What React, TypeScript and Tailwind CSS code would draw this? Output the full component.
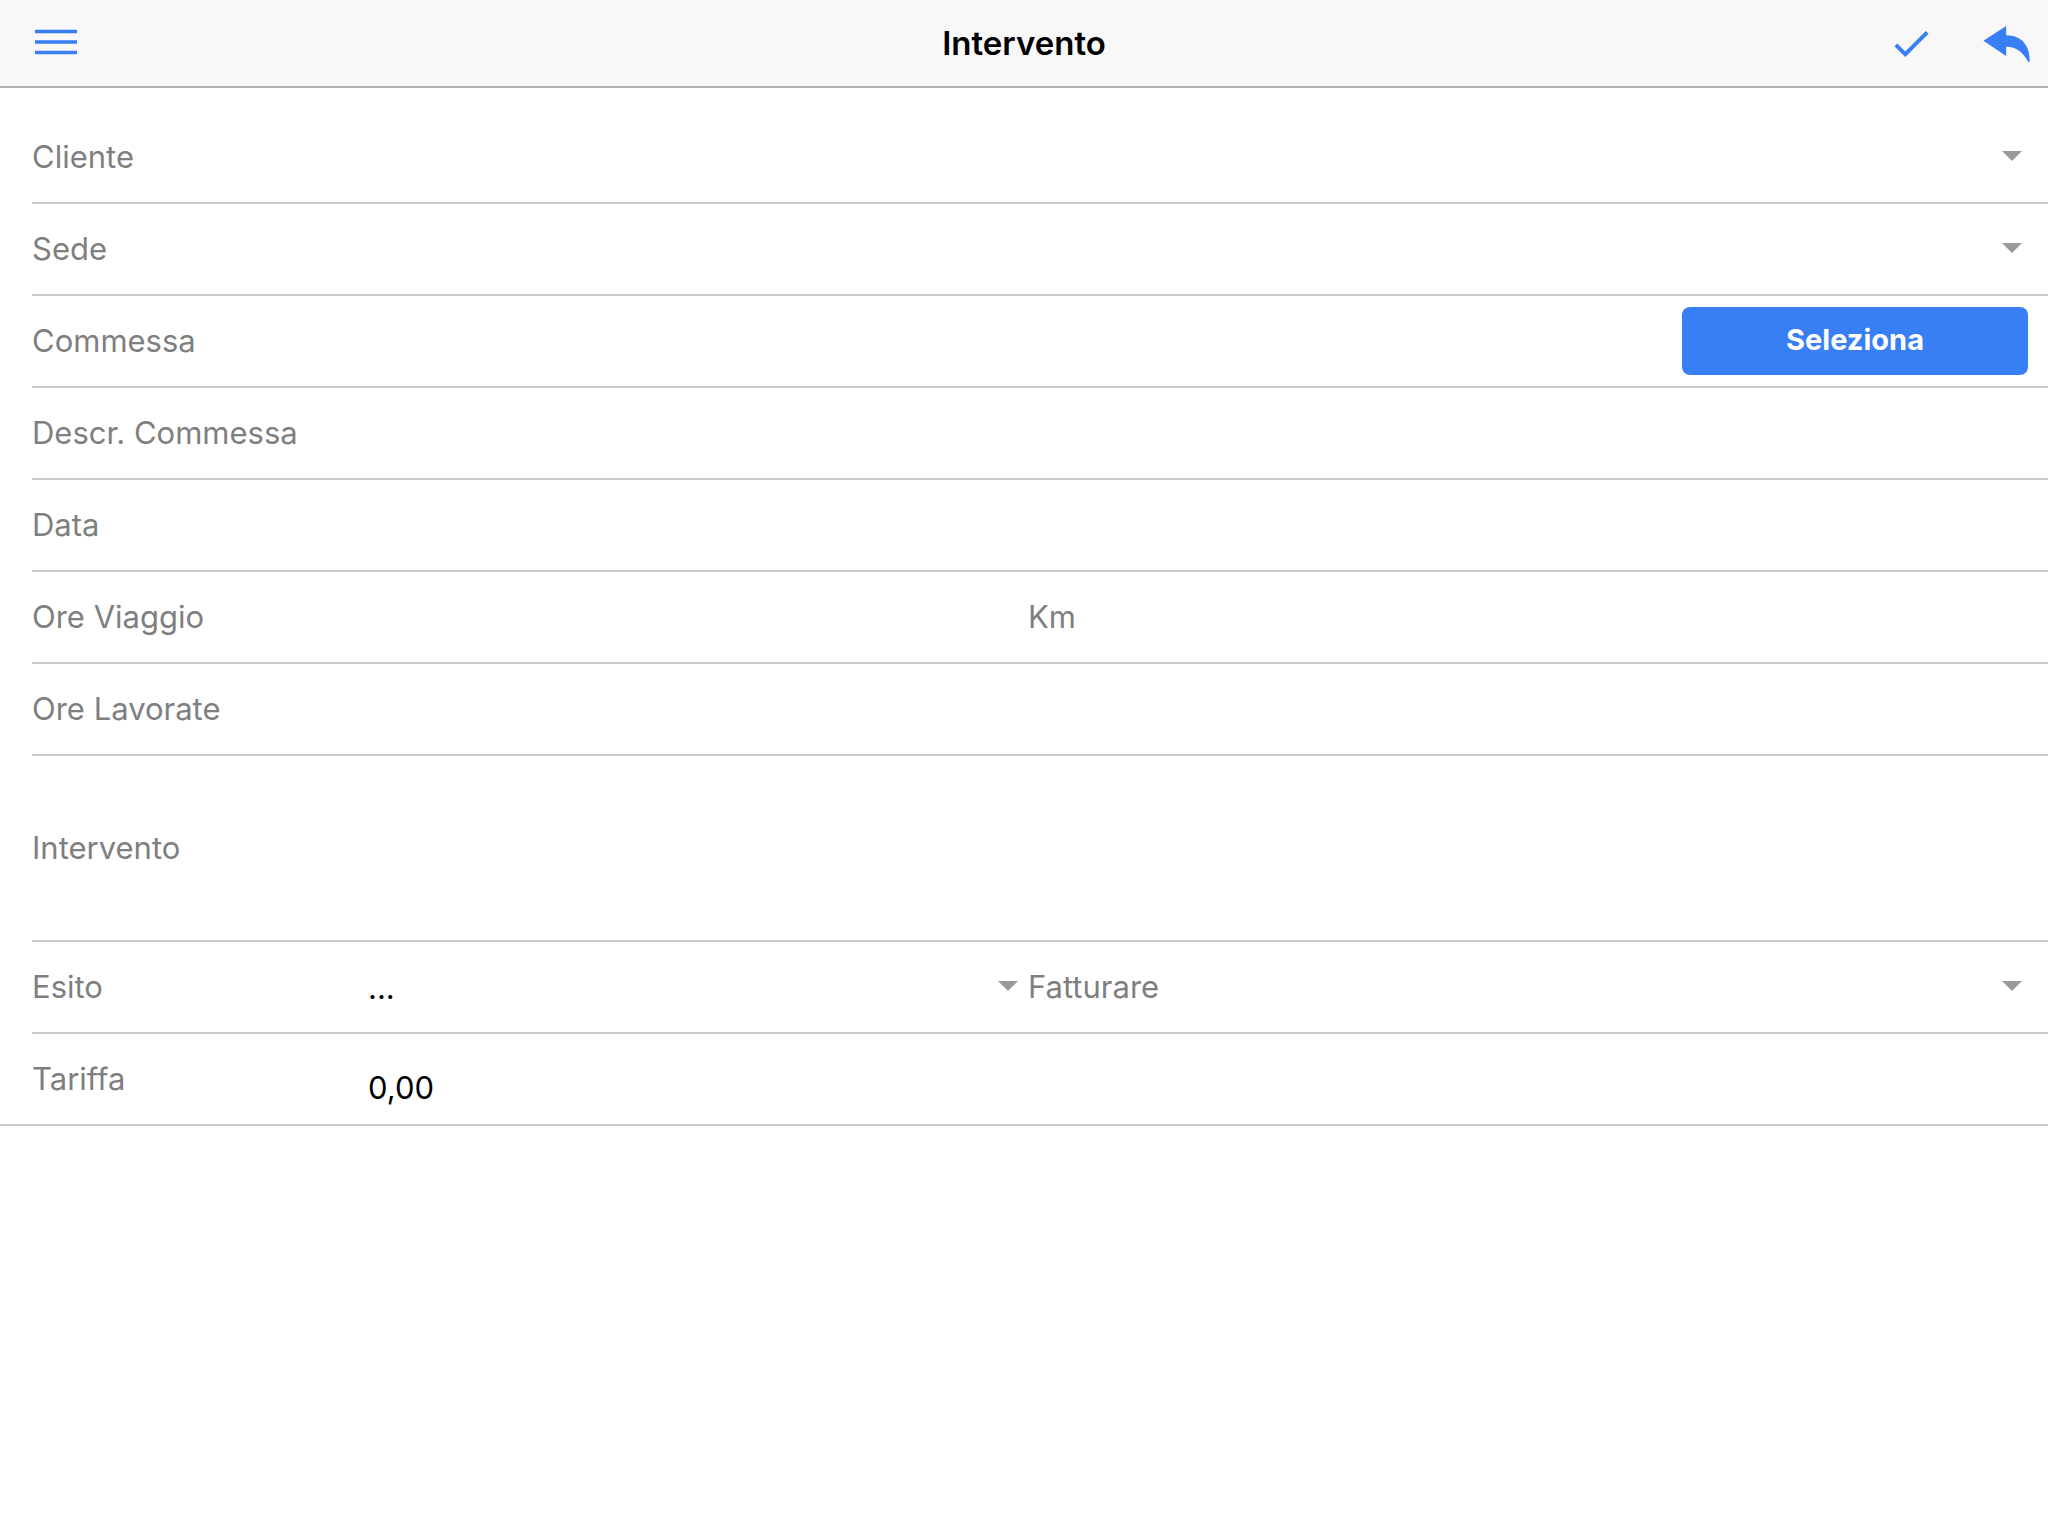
import React, { useState } from 'react';

const LABEL = 'w-[336px] shrink-0 text-[#7f7f7f]';
const FIELD = 'min-w-0 flex-1 self-stretch bg-transparent text-black outline-none';

interface RowProps {
  children: React.ReactNode;
  tall?: boolean;
  last?: boolean;
}

function Row({ children, tall, last }: RowProps) {
  return (
    <div className={last ? 'border-b-2 border-[#c8c8c8] pl-8' : 'pl-8'}>
      <div className={`flex items-center pr-4 ${tall ? 'h-[186px]' : last ? 'h-[90px]' : 'h-[92px]'} ${last ? '' : 'border-b-2 border-[#c8c8c8]'}`}>
        {children}
      </div>
    </div>
  );
}

interface TextFieldProps {
  id: string;
  label: string;
  value?: string;
  low?: boolean;
}

function TextField({ id, label, value = '', low }: TextFieldProps) {
  const [text, setText] = useState(value);

  return (
    <div className="flex min-w-0 flex-1 items-center self-stretch">
      <label htmlFor={id} className={LABEL}>{label}</label>
      <input id={id} type="text" value={text} onChange={(e) => setText(e.target.value)} className={`${FIELD} ${low ? 'pt-[18px]' : ''}`} />
    </div>
  );
}

interface SelectFieldProps {
  id: string;
  label: string;
  options: string[];
}

function SelectField({ id, label, options }: SelectFieldProps) {
  return (
    <div className="flex min-w-0 flex-1 items-center self-stretch">
      <label htmlFor={id} className={LABEL}>{label}</label>
      <div className="relative flex min-w-0 flex-1 self-stretch">
        <select id={id} className={`${FIELD} appearance-none pt-0.5 pr-10`}>
          {options.map((option) => (
            <option key={option}>{option}</option>
          ))}
        </select>
        <svg viewBox="0 0 20 10" className="pointer-events-none absolute top-[39px] right-[10px] h-[10px] w-5 fill-[#999999]">
          <path d="M0 0h20L10 10z" />
        </svg>
      </div>
    </div>
  );
}

export default function App() {
  return (
    <div className="min-h-screen bg-white font-['Inter',sans-serif] text-[31px] leading-10">
      <header className="grid h-[88px] grid-cols-[1fr_auto_1fr] items-center border-b-2 border-[#b2b2b2] bg-[#f8f8f8]">
        <button type="button" aria-label="Menu" className="ml-[35px] justify-self-start pb-0.5">
          <svg viewBox="0 0 42 26" className="h-[26px] w-[42px] fill-[#387ef5]">
            <path d="M0 .7h42v3.6H0zM0 11.2h42v3.6H0zM0 21.7h42v3.6H0z" />
          </svg>
        </button>
        <h1 className="text-[33px] font-semibold text-black">Intervento</h1>
        <div className="mr-[18px] flex items-center gap-[54px] justify-self-end">
          <button type="button" aria-label="Conferma" className="pt-0.5">
            <svg viewBox="3.41 5.59 17.59 13.41" className="h-[26px] w-[35px] fill-[#387ef5]">
              <path d="M9 16.17L4.83 12l-1.42 1.41L9 19 21 7l-1.41-1.41z" />
            </svg>
          </button>
          <button type="button" aria-label="Indietro" className="pt-0.5">
            <svg viewBox="0 0 140 109" className="h-[36px] w-[47px] fill-[#387ef5]">
              <path d="M0 45L69 0v28c48 0 71 34 71 72v9h-4C121 83 104 63 69 63v28z" />
            </svg>
          </button>
        </div>
      </header>

      <form className="pt-6" onSubmit={(e) => e.preventDefault()}>
        <Row>
          <SelectField id="cliente" label="Cliente" options={['']} />
        </Row>
        <Row>
          <SelectField id="sede" label="Sede" options={['']} />
        </Row>
        <Row>
          <TextField id="commessa" label="Commessa" />
          <button type="button" className="mr-1 h-[68px] w-[346px] shrink-0 rounded-lg bg-[#387ef5] pb-0.5 text-[29px] font-bold text-white">
            Seleziona
          </button>
        </Row>
        <Row>
          <TextField id="descr-commessa" label="Descr. Commessa" />
        </Row>
        <Row>
          <TextField id="data" label="Data" />
        </Row>
        <Row>
          <div className="grid flex-1 grid-cols-[996fr_1004fr] self-stretch">
            <TextField id="ore-viaggio" label="Ore Viaggio" />
            <TextField id="km" label="Km" />
          </div>
        </Row>
        <Row>
          <TextField id="ore-lavorate" label="Ore Lavorate" />
        </Row>
        <Row tall>
          <label htmlFor="intervento" className={LABEL}>Intervento</label>
          <textarea id="intervento" className={`${FIELD} resize-none py-4`} />
        </Row>
        <Row>
          <div className="grid flex-1 grid-cols-[996fr_1004fr] self-stretch">
            <SelectField id="esito" label="Esito" options={['...']} />
            <SelectField id="fatturare" label="Fatturare" options={['']} />
          </div>
        </Row>
        <Row last>
          <TextField id="tariffa" label="Tariffa" value="0,00" low />
        </Row>
      </form>
    </div>
  );
}
